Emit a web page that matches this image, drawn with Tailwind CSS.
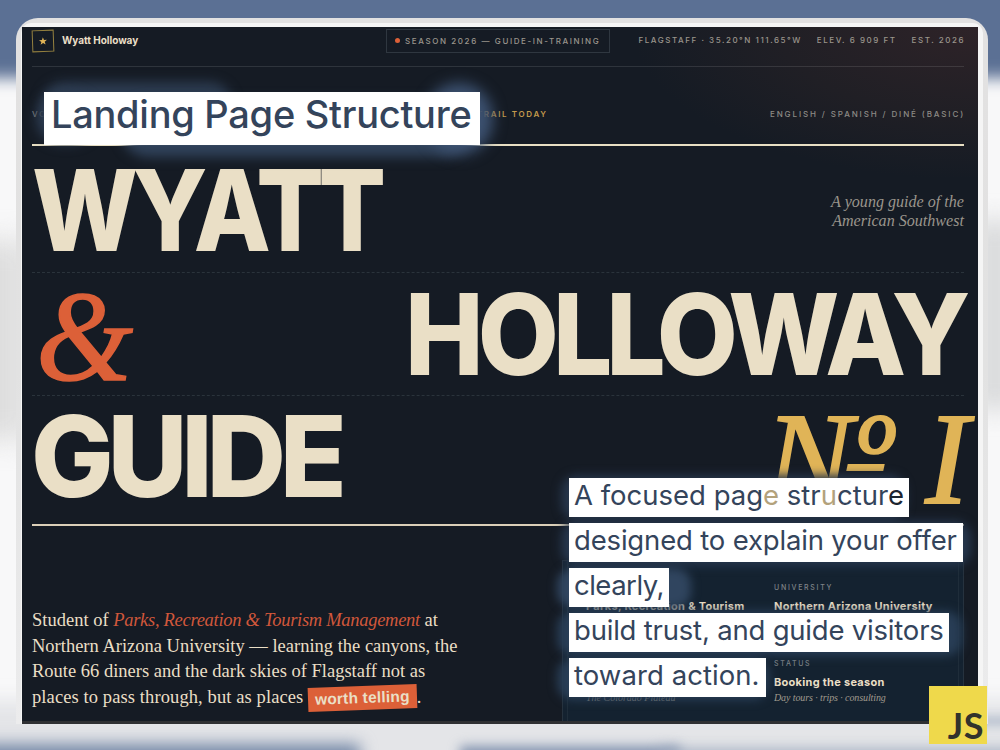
<!DOCTYPE html>
<html lang="en">

<head>
    <meta charset="UTF-8">
    <meta name="viewport" content="width=device-width, initial-scale=1">
    <title>Landing Page Structure</title>
    <script src="https://cdn.jsdelivr.net/npm/@tailwindcss/browser@4"></script>
</head>

<body class="relative h-[750px] w-[1000px] overflow-hidden bg-[#f8f8f9] font-['Inter',sans-serif]">
    <!-- backdrop -->
    <div class="absolute inset-0 overflow-hidden">
        <div class="absolute -inset-x-10 -top-10 h-[118px] bg-[#5b7094] blur-[8px]"></div>
        <div class="absolute -left-10 top-[240px] h-[200px] w-[70px] bg-[#dedede] blur-[14px]"></div>
        <div class="absolute left-[975px] top-[220px] h-[190px] w-[40px] bg-[#d9dadb] blur-[12px]"></div>
        <div class="absolute -inset-x-10 top-[700px] h-[80px] bg-[#e4e5e8] blur-[9px]"></div>
        <div class="absolute -left-10 top-[744px] h-[40px] w-[400px] bg-[#7387a6] blur-[8px]"></div>
        <div class="absolute left-[460px] top-[746px] h-[40px] w-[220px] bg-[#8293af] blur-[6px]"></div>
        <div class="absolute left-[660px] top-[749px] h-[40px] w-[440px] bg-[#a3afc2] blur-[7px]"></div>
        <div class="absolute left-[975px] top-[716px] h-[10px] w-[60px] bg-[#b9c2d0] blur-[5px]"></div>
    </div>

    <!-- window frame -->
    <div class="absolute left-[16px] top-[18px] h-[706px] w-[972px] rounded-t-[22px] bg-gradient-to-b from-[#e2e1e1] via-[#e2e2e2] to-[#ececed]"></div>
    <div class="absolute left-[21px] top-[23px] h-[701px] w-[962px] rounded-t-[10px] bg-[#f5f5f5]"></div>

    <main class="absolute left-[22px] top-[27px] flex h-[697px] w-[956px] flex-col overflow-hidden border-b-[3px] border-[#2f3033] bg-[#151b24] pl-[10px] pr-[14px] text-[#eadfc6]">
        <div class="absolute right-0 top-0 h-[150px] w-[340px] bg-[radial-gradient(ellipse_at_top_right,#2e2328_0%,#201f25_42%,#151b2400_72%)]"></div>

        <header class="relative flex h-[40px] shrink-0 items-start border-b border-[#ffffff1c] text-[8px] font-medium text-[#9a958c]">
            <div class="mt-[3px] flex size-[22px] -rotate-2 items-center justify-center border border-[#94803f]">
                <svg class="size-[8px]" viewBox="0 0 24 24" fill="#e0b457">
                    <path d="M12 1l3 8h9l-7 5.500 2.600 8.500L12 18l-7.600 5L7 14.500 0 9h9z" />
                </svg>
            </div>
            <div class="ml-[8px] mt-[6px] w-[324px] text-[10px] font-bold leading-[14px] tracking-[-0.030px] text-[#eadfc6]">Wyatt Holloway</div>
            <div class="mt-[2px] flex h-[24px] w-[224px] items-center whitespace-nowrap border border-[#2f3740] pb-px pl-[8px] tracking-[1.600px]">
                <span class="mr-[5px] size-[5px] rounded-full bg-[#dc6038]"></span>SEASON 2026 — GUIDE-IN-TRAINING
            </div>
            <div class="-mr-px ml-auto mt-[7px] flex gap-[15px] whitespace-nowrap leading-[12px] tracking-[1.550px]">
                <span>FLAGSTAFF · 35.20°N 111.65°W</span>
                <span>ELEV. 6 909 FT</span>
                <span>EST. 2026</span>
            </div>
        </header>

        <div class="relative flex h-[79px] shrink-0 items-center border-b-2 border-[#e8dfc3] pt-[17px] text-[8px] font-medium tracking-[1.880px] text-[#8d8b85]">
            <span class="w-[401px]">VOL. I</span>
            <span class="font-semibold tracking-[1.650px] text-[#c39a4c]">ON THE TRAIL TODAY</span>
            <span class="-mr-px ml-auto">ENGLISH / SPANISH / DINÉ (BASIC)</span>
        </div>

        <section class="relative flex h-[127px] shrink-0 items-center justify-between border-b border-dashed border-[#2a333b]">
            <h1 class="mt-[2px] origin-left scale-x-[0.887] text-[113px] font-extrabold leading-none tracking-[-6.500px]">WYATT</h1>
            <p class="pt-[4px] text-right font-['Liberation_Serif',serif] text-[16.100px] italic leading-[19px] text-[#9a958c]">A young guide of the<br>American Southwest</p>
        </section>
        <section class="relative flex h-[123px] shrink-0 items-center justify-between border-b border-dashed border-[#2a333b]">
            <span class="ml-[4px] mt-[4px] origin-left scale-x-[0.96] font-['Liberation_Serif',serif] text-[130px] italic leading-none text-[#dc6038] [-webkit-text-stroke:1.5px_#dc6038]">&amp;</span>
            <h1 class="-mr-px origin-right scale-x-[0.93] text-[113px] font-extrabold leading-none tracking-[-6.500px]">HOLLOWAY</h1>
        </section>
        <section class="relative flex h-[130px] shrink-0 items-center justify-between border-b-2 border-[#dbcfb8] pb-[8px]">
            <h1 class="-ml-px mt-px origin-left scale-x-[0.975] text-[113px] font-extrabold leading-none tracking-[-6.500px]">GUIDE</h1>
            <span class="relative -mr-[5px] mt-[4px] whitespace-nowrap font-['Liberation_Serif',serif] text-[131px] italic leading-none text-[#e0b457] [-webkit-text-stroke:2px_#e0b457]">Nº I
                <i class="absolute left-[82px] top-[71px] h-[7px] w-[37px] -skew-x-12 bg-[#e0b457]"></i>
            </span>
        </section>

        <section class="relative flex grow items-start justify-between">
            <p class="mt-[82px] whitespace-nowrap font-['Liberation_Serif',serif] text-[18.500px] leading-[25.600px]">
                Student of <em class="tracking-[-0.290px] text-[#d0573b]">Parks, Recreation &amp; Tourism Management</em> at<br>
                Northern Arizona University — learning the canyons, the<br>
                Route 66 diners and the dark skies of Flagstaff not as<br>
                <span class="tracking-[0.100px]">places to pass through, but as places</span>
                <b class="inline-block -rotate-2 bg-[#dc6038] px-[7px] font-['Liberation_Sans',sans-serif] text-[15.500px] leading-[24px] tracking-[0.200px]">worth telling</b>.
            </p>
            <div class="mt-[34px] h-[162px] w-[402px] border border-b-0 border-[#26323e] bg-[#142230] px-[4px]">
                <div class="grid h-full grid-cols-[188px_1fr] content-start gap-y-[14px] whitespace-nowrap border-x border-[#1f2d3a] pl-[18px] pt-[22px]">
                    <div class="h-[62px]">
                        <div class="text-[7px] font-medium leading-[10px] tracking-[1.700px] text-[#7f8488]">PROGRAM</div>
                        <div class="mt-[5px] text-[11px] font-bold leading-[16px] tracking-[0.280px]">Parks, Recreation &amp; Tourism</div>
                    </div>
                    <div class="h-[62px]">
                        <div class="text-[7px] font-medium leading-[10px] tracking-[1.700px] text-[#7f8488]">UNIVERSITY</div>
                        <div class="mt-[5px] text-[11px] font-bold leading-[16px] tracking-[0.280px]">Northern Arizona University</div>
                    </div>
                    <div>
                        <div class="text-[7px] font-medium leading-[10px] tracking-[1.700px] text-[#7f8488]">BASE</div>
                        <div class="mt-[5px] text-[11px] font-bold leading-[16px] tracking-[0.280px]">Flagstaff</div>
                        <div class="font-['Liberation_Serif',serif] text-[10px] italic leading-[16px] text-[#8d8b85]">The Colorado Plateau</div>
                    </div>
                    <div>
                        <div class="text-[7px] font-medium leading-[10px] tracking-[1.700px] text-[#7f8488]">STATUS</div>
                        <div class="mt-[5px] text-[11px] font-bold leading-[16px] tracking-[0.280px]">Booking the season</div>
                        <div class="font-['Liberation_Serif',serif] text-[10px] italic leading-[16px] tracking-[-0.100px] text-[#a09a8e]">Day tours · trips · consulting</div>
                    </div>
                </div>
            </div>
        </section>
    </main>

    <!-- title overlay -->
    <div class="absolute left-[42px] top-[82px] h-[44px] w-[190px] rounded-full bg-[#2c3b50] blur-[6px]"></div>
    <div class="absolute left-[36px] top-[92px] h-[52px] w-[60px] rounded-full bg-[#2c3b50] blur-[6px]"></div>
    <div class="absolute left-[120px] top-[100px] h-[57px] w-[350px] rounded-full bg-[#30425a] blur-[6px]"></div>
    <div class="absolute left-[425px] top-[83px] h-[72px] w-[68px] rounded-full bg-[#3c5170] blur-[7px]"></div>
    <div class="absolute left-[44px] top-[92px] flex h-[53px] w-[436px] items-center whitespace-nowrap bg-white pl-[7px] text-[38px] font-medium leading-none tracking-[-0.270px] text-[#34445b]">
        <span class="-mt-[10px]">Landing Page Structure</span>
    </div>

    <!-- description overlay -->
    <div class="absolute left-[561px] top-[475px] h-[45px] w-[345px] rounded-2xl bg-[#26354a] blur-[5px]"></div>
    <div class="absolute left-[561px] top-[521px] h-[45px] w-[410px] rounded-2xl bg-[#26364c] blur-[5px]"></div>
    <div class="absolute left-[557px] top-[568px] h-[40px] w-[134px] rounded-2xl bg-[#30455f] blur-[5px]"></div>
    <div class="absolute left-[557px] top-[611px] h-[45px] w-[405px] rounded-2xl bg-[#283d55] blur-[5px]"></div>
    <div class="absolute left-[557px] top-[658px] h-[42px] w-[212px] rounded-2xl bg-[#283d55] blur-[5px]"></div>
    <div class="absolute left-[569px] top-[478px] flex flex-col items-start gap-[6px] whitespace-nowrap text-[27.500px] leading-[34px] text-[#34445b]">
        <div class="h-[39px] w-[340px] bg-white pl-[5px] tracking-[0px]">A focused pag<span class="text-[#b3a27c]">e</span> str<span class="text-[#b3a27c]">u</span>ctur<span class="text-[#1d2530]">e</span></div>
        <div class="h-[39px] w-[394px] bg-white pl-[5px] tracking-[-0.170px]">designed to explain your offer</div>
        <div class="h-[39px] w-[100px] bg-white pl-[5px] tracking-[-0.500px]">clearly,</div>
        <div class="h-[39px] w-[380px] bg-white pl-[5px] tracking-[-0.200px]">build trust, and guide visitors</div>
        <div class="h-[39px] w-[197px] bg-white pl-[5px] tracking-[0.070px]">toward action.</div>
    </div>

    <!-- js badge -->
    <div class="absolute left-[929px] top-[686px] flex size-[58px] items-end justify-end bg-[#efd94b] pr-[3px] font-['Lato',sans-serif] text-[36px] font-bold leading-[38px] tracking-[0.500px] text-[#32332c]">JS</div>
</body>

</html>
